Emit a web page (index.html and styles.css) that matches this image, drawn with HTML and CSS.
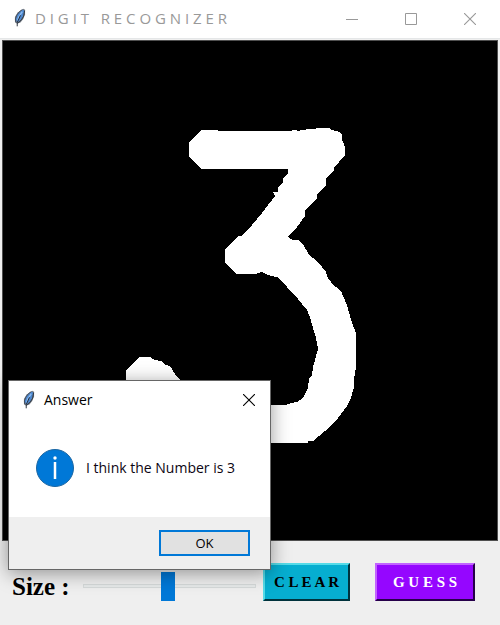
FILE: index.html
```html
<!DOCTYPE html>
<html lang="en">
<head>
<meta charset="utf-8">
<title>D I G I T   R E C O G N I Z E R</title>
<link rel="stylesheet" href="styles.css">
</head>
<body>
<svg class="defs" aria-hidden="true">
  <symbol id="feather" viewBox="0 0 13 20">
    <path d="M10 0 12 1 12 6 10 11 7 15 3 16 1 14 1 9 4 4Z" fill="#777d86"/>
    <path d="M9 1 11 2 10 7 8 11 5 14 3 14 2 11 4 6Z" fill="#4a86cf"/>
    <path d="M9 1 6 3 3 7 1.500 11 2 15" fill="none" stroke="#3d4b5e"/>
    <path d="M9 3 5 9 4 13" fill="none" stroke="#8dbbef" stroke-width="1.500"/>
    <path d="M11.500 2 10.500 8 8 12 4 16" fill="none" stroke="#26303d"/>
    <path d="M7 7 3.500 15V19" fill="none" stroke="#1c2430"/>
  </symbol>
  <symbol id="close" viewBox="0 0 12 12">
    <path d="M0 0 12 12M12 0 0 12" fill="none" stroke="currentColor" stroke-width="1.1"/>
  </symbol>
</svg>

<div class="window">
  <header class="titlebar">
    <svg class="feather"><use href="#feather"/></svg>
    <h1 class="title">D I G I T &nbsp; R E C O G N I Z E R</h1>
    <div class="window-buttons">
      <button class="window-button" type="button" aria-label="Minimize">
        <svg class="glyph" viewBox="0 0 12 12"><path d="M0 6.500H12" stroke="currentColor"/></svg>
      </button>
      <button class="window-button" type="button" aria-label="Maximize">
        <svg class="glyph" viewBox="0 0 12 12"><path d="M.5.500H11.500V11.500H.5Z" fill="none" stroke="currentColor"/></svg>
      </button>
      <button class="window-button" type="button" aria-label="Close">
        <svg class="glyph"><use href="#close"/></svg>
      </button>
    </div>
  </header>

  <main class="client">
    <svg class="canvas" viewBox="3 41 494 499" role="img" aria-label="Handwritten digit 3">
      <path fill="#fff" shape-rendering="crispEdges" d="M201 130H218V131H292V130H297V131H300V130H306V129H316V128H329L332 130L336 131L339 132L342 135V140L344 144L345 148V155L334 168V171L326 178V185L317 194V198L305 210V216L297 227L288 237L293 240H299L304 246L310 256L313 258L322 267L326 272L328 279L331 282L333 285L338 288L342 293L343 296L347 305L350 316L354 328L356 333V367L354 379V387L351 398L347 406L338 418L325 431L313 441H308V443H230L190 420L178 408L126 381V370L139 357H150L155 360L161 361L165 365L170 366L175 374L181 381L195 395L210 405H285L291 403L297 402L303 398L308 388L309 379L312 375L313 367L315 360L318 349L316 338L313 328L310 317L307 310L298 299L287 287L277 277L271 276L266 274L262 272L255 274H237L225 263V249L239 236H242L252 225L262 213L275 196L273 192H278V187L283 182V178L288 174V169H202L189 157V143Z"/>
    </svg>
    <form class="controls">
      <label class="size-label" for="size">Size :</label>
      <input class="size" id="size" type="range" min="0" max="100" value="49">
      <button class="action clear" type="button">C L E A R</button>
      <button class="action guess" type="button">G U E S S</button>
    </form>
  </main>

  <section class="dialog" role="dialog" aria-labelledby="answer-title">
    <header class="dialog-bar">
      <svg class="feather"><use href="#feather"/></svg>
      <h2 class="dialog-title" id="answer-title">Answer</h2>
      <button class="dialog-close" type="button" aria-label="Close">
        <svg class="glyph"><use href="#close"/></svg>
      </button>
    </header>
    <div class="message">
      <svg class="info" viewBox="0 0 38 38" aria-hidden="true">
        <circle cx="19" cy="19" r="18.500" fill="#0078d7" stroke="#1a66a3"/>
        <path d="M19 13V30" stroke="#fff" stroke-width="2.500"/>
        <circle cx="19" cy="9" r="1.700" fill="#fff"/>
      </svg>
      <p class="text">I think the Number is 3</p>
    </div>
    <footer class="dialog-footer">
      <button class="ok" type="button">OK</button>
    </footer>
  </section>
</div>
</body>
</html>
```
FILE: styles.css
```css
* {
  box-sizing: border-box;
}

body {
  margin: 0;
  background: #efefef;
  font-family: "Open Sans", "Noto Sans", sans-serif;
}

h1, h2, p {
  margin: 0;
  font-weight: 400;
}

button {
  margin: 0;
  padding: 0;
  font-family: inherit;
}

.defs {
  position: absolute;
  width: 0;
  height: 0;
}

.window {
  position: relative;
  min-height: 100vh;
}

.titlebar {
  display: flex;
  align-items: center;
  height: 38px;
  padding: 0 1px 2px 14px;
  background: #fff;
}

.feather {
  flex: none;
  width: 12px;
  height: 20px;
}

.title {
  margin-left: 9px;
  color: #999;
  font-size: 15px;
  line-height: 20px;
  white-space: nowrap;
}

.window-buttons {
  display: flex;
  margin-left: auto;
}

.window-button {
  display: grid;
  place-items: center;
  width: 59px;
  height: 36px;
  padding-top: 2px;
  border: 0;
  background: none;
  color: #999;
}

.glyph {
  display: block;
  width: 12px;
  height: 12px;
}

.client {
  padding: 1px 2px 0;
  border-top: 1px solid #e5e7e8;
}

.canvas {
  display: block;
  width: 100%;
  border: 1px solid #4f4f4f;
  background: #000;
}

.controls {
  display: flex;
  align-items: center;
  padding: 22px 23px 24px 10px;
}

.size-label {
  width: 71px;
  padding-top: 10px;
  color: #000;
  font: bold 25px/28px "Liberation Serif", serif;
  white-space: nowrap;
}

.size {
  flex: 1;
  min-width: 0;
  height: 30px;
  margin: 8px 7px 0 0;
  background: none;
  appearance: none;
}

.size::-webkit-slider-runnable-track {
  height: 4px;
  border: 1px solid #d6dada;
  background: #e7eaea;
}

.size::-webkit-slider-thumb {
  width: 14px;
  height: 29px;
  margin-top: -13px;
  background: #0078d7;
  appearance: none;
}

.action {
  height: 38px;
  border: 2px solid;
  font: bold 15px/20px "Liberation Serif", serif;
  white-space: nowrap;
}

.clear {
  width: 87px;
  margin-right: 25px;
  border-color: #55dbe8 #00323c #00323c #55dbe8;
  background: #06aed0;
  color: #000;
}

.guess {
  width: 100px;
  border-color: #c263ff #26004a #26004a #c263ff;
  background: #9506ff;
  color: #fff;
}

.dialog {
  position: absolute;
  top: 380px;
  left: 8px;
  width: 263px;
  border: 1px solid #666;
  background: #fff;
  box-shadow: 0 3px 18px rgba(0, 0, 0, 0.4);
}

.dialog-bar {
  display: flex;
  align-items: center;
  height: 38px;
  padding: 0 15px 0 14px;
}

.dialog-title {
  margin-left: 9px;
  color: #000;
  font-size: 14px;
  line-height: 20px;
}

.dialog-close {
  margin-left: auto;
  border: 0;
  background: none;
  color: #000;
}

.message {
  display: flex;
  align-items: center;
  gap: 12px;
  height: 98px;
  padding-left: 27px;
}

.info {
  flex: none;
  width: 38px;
  height: 38px;
}

.text {
  color: #0c0512;
  font-size: 14px;
  line-height: 20px;
  white-space: nowrap;
}

.dialog-footer {
  display: flex;
  justify-content: flex-end;
  padding: 13px 20px;
  background: #efefef;
}

.ok {
  width: 91px;
  height: 26px;
  border: 2px solid #0078d7;
  background: #e1e1e1;
  color: #000;
  font-size: 13px;
}
```
